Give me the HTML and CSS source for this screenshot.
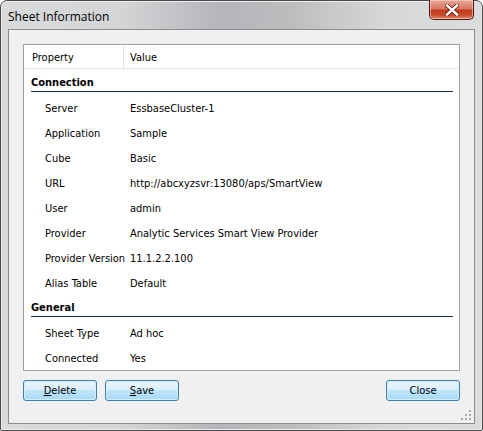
FILE: index.html
```html
<!DOCTYPE html>
<html>
<head>
<meta charset="utf-8">
<link rel="stylesheet" href="styles.css">
</head>
<body>
<div class="window">
  <div class="titlebar">
    <span class="title">Sheet Information</span>
    <div class="close-btn"><svg width="14" height="12" viewBox="0 0 14 12"><path d="M2 1.5 L12 10.5 M12 1.5 L2 10.5" stroke="#5a1d14" stroke-width="4" stroke-linecap="square"/><path d="M2 1.5 L12 10.5 M12 1.5 L2 10.5" stroke="#fff" stroke-width="2.4" stroke-linecap="square"/></svg></div>
  </div>
  <div class="client">
    <div class="grid">
      <div class="row header"><div class="c1">Property</div><div class="c2">Value</div></div>
      <div class="row cat"><div class="cat-label">Connection</div></div>
      <div class="row"><div class="c1 item">Server</div><div class="c2">EssbaseCluster-1</div></div>
      <div class="row"><div class="c1 item">Application</div><div class="c2">Sample</div></div>
      <div class="row"><div class="c1 item">Cube</div><div class="c2">Basic</div></div>
      <div class="row"><div class="c1 item">URL</div><div class="c2">http://abcxyzsvr:13080/aps/SmartView</div></div>
      <div class="row"><div class="c1 item">User</div><div class="c2">admin</div></div>
      <div class="row"><div class="c1 item">Provider</div><div class="c2">Analytic Services Smart View Provider</div></div>
      <div class="row"><div class="c1 item">Provider Version</div><div class="c2">11.1.2.2.100</div></div>
      <div class="row"><div class="c1 item">Alias Table</div><div class="c2">Default</div></div>
      <div class="row cat"><div class="cat-label">General</div></div>
      <div class="row"><div class="c1 item">Sheet Type</div><div class="c2">Ad hoc</div></div>
      <div class="row"><div class="c1 item">Connected</div><div class="c2">Yes</div></div>
    </div>
    <div class="buttons">
      <button class="btn"><u>D</u>elete</button>
      <button class="btn"><u>S</u>ave</button>
      <span class="spacer"></span>
      <button class="btn">Close</button>
    </div>
    <div class="grip">
      <svg width="10" height="10" viewBox="0 0 10 10" fill="#a8a8a8">
        <rect x="8" y="0" width="2" height="2"/>
        <rect x="4" y="4" width="2" height="2"/><rect x="8" y="4" width="2" height="2"/>
        <rect x="0" y="8" width="2" height="2"/><rect x="4" y="8" width="2" height="2"/><rect x="8" y="8" width="2" height="2"/>
      </svg>
    </div>
  </div>
</div>
</body>
</html>
```

FILE: styles.css
```css
html, body {
  margin: 0;
  padding: 0;
  background: #ffffff;
}
.window {
  width: 481px;
  height: 429px;
  border: 1px solid #4a4a4a;
  border-radius: 7px 7px 2px 2px;
  background: linear-gradient(90deg, #d8dadc 0%, #d3d5d7 25%, #b4b6b9 45%, #babcbe 60%, #d6d8da 80%, #dadcde 100%);
  display: flex;
  flex-direction: column;
  position: relative;
  box-shadow: inset 0 0 0 1px #ecedee;
  font-family: "DejaVu Sans Condensed", "DejaVu Sans", Tahoma, sans-serif;
  font-stretch: condensed;
  font-size: 11px;
  color: #000;
}
.titlebar {
  height: 28px;
  display: flex;
  align-items: center;
  position: relative;
}
.title {
  margin-left: 7px;
  margin-top: 2px;
  font-family: "Open Sans", "Segoe UI", sans-serif;
  font-stretch: normal;
  font-size: 12px;
  color: #000;
}
.close-btn {
  position: absolute;
  right: 8px;
  top: -1px;
  width: 43px;
  height: 19px;
  border: 1px solid #4d1c16;
  border-top: none;
  border-radius: 0 0 5px 5px;
  background: linear-gradient(180deg, #e8a89a 0%, #d9765f 45%, #c2391f 55%, #c94a2e 80%, #e48b6c 100%);
  box-shadow: inset 0 0 0 1px rgba(255,220,210,0.55);
  display: flex;
  align-items: center;
  justify-content: center;
}
.client {
  margin: 0 7px;
  flex: 1;
  margin-bottom: 6px;
  background: #f0f0f0;
  border: 1px solid #8b8d90;
  position: relative;
  padding: 14px 14px 0 14px;
}
.grid {
  background: #fff;
  border: 1px solid #a0a0a0;
  height: 325px;
}
.row {
  height: 25px;
  display: flex;
  align-items: center;
  padding-top: 3px;
  box-sizing: border-box;
  white-space: nowrap;
}
.header {
  border-bottom: 1px solid #e3e3e3;
  height: 24px;
  margin: 0 1px;
  padding-top: 1px;
}
.header .c1 {
  border-right: 1px solid #e3e3e3;
  align-self: stretch;
  display: flex;
  align-items: center;
  padding-left: 7px;
  width: 91px;
}
.header .c2 {
  padding-left: 6px;
}
.c1 {
  width: 99px;
  padding-left: 7px;
  flex: none;
}
.c1.item {
  padding-left: 21px;
  width: 85px;
}
.c2 {
  padding-left: 0;
  white-space: nowrap;
}
.cat {
  align-items: flex-start;
  padding-top: 0;
}
.cat-label {
  flex: 1;
  margin: 0 6px 0 7px;
  font-weight: bold;
  border-bottom: 1px solid #1c2a5c;
  display: flex;
  align-items: center;
  height: 23px;
  padding-top: 4px;
  box-sizing: border-box;
}
.buttons {
  display: flex;
  gap: 8px;
  margin-top: 9px;
}
.spacer {
  flex: 1;
}
.btn {
  width: 74px;
  height: 21px;
  margin: 0;
  padding: 0;
  font-family: "DejaVu Sans Condensed", "DejaVu Sans", Tahoma, sans-serif;
  font-stretch: condensed;
  font-size: 11px;
  color: #000;
  border: 1px solid #3c7fb1;
  border-radius: 3px;
  background: linear-gradient(180deg, #eaf6fd 0%, #d9f0fc 45%, #bee6fd 50%, #a7d9f5 100%);
  box-shadow: inset 0 0 0 1px #d8eefb;
}
.btn u {
  text-decoration: underline;
}
.grip {
  position: absolute;
  right: 3px;
  bottom: 3px;
  width: 10px;
  height: 10px;
  line-height: 0;
}
```
